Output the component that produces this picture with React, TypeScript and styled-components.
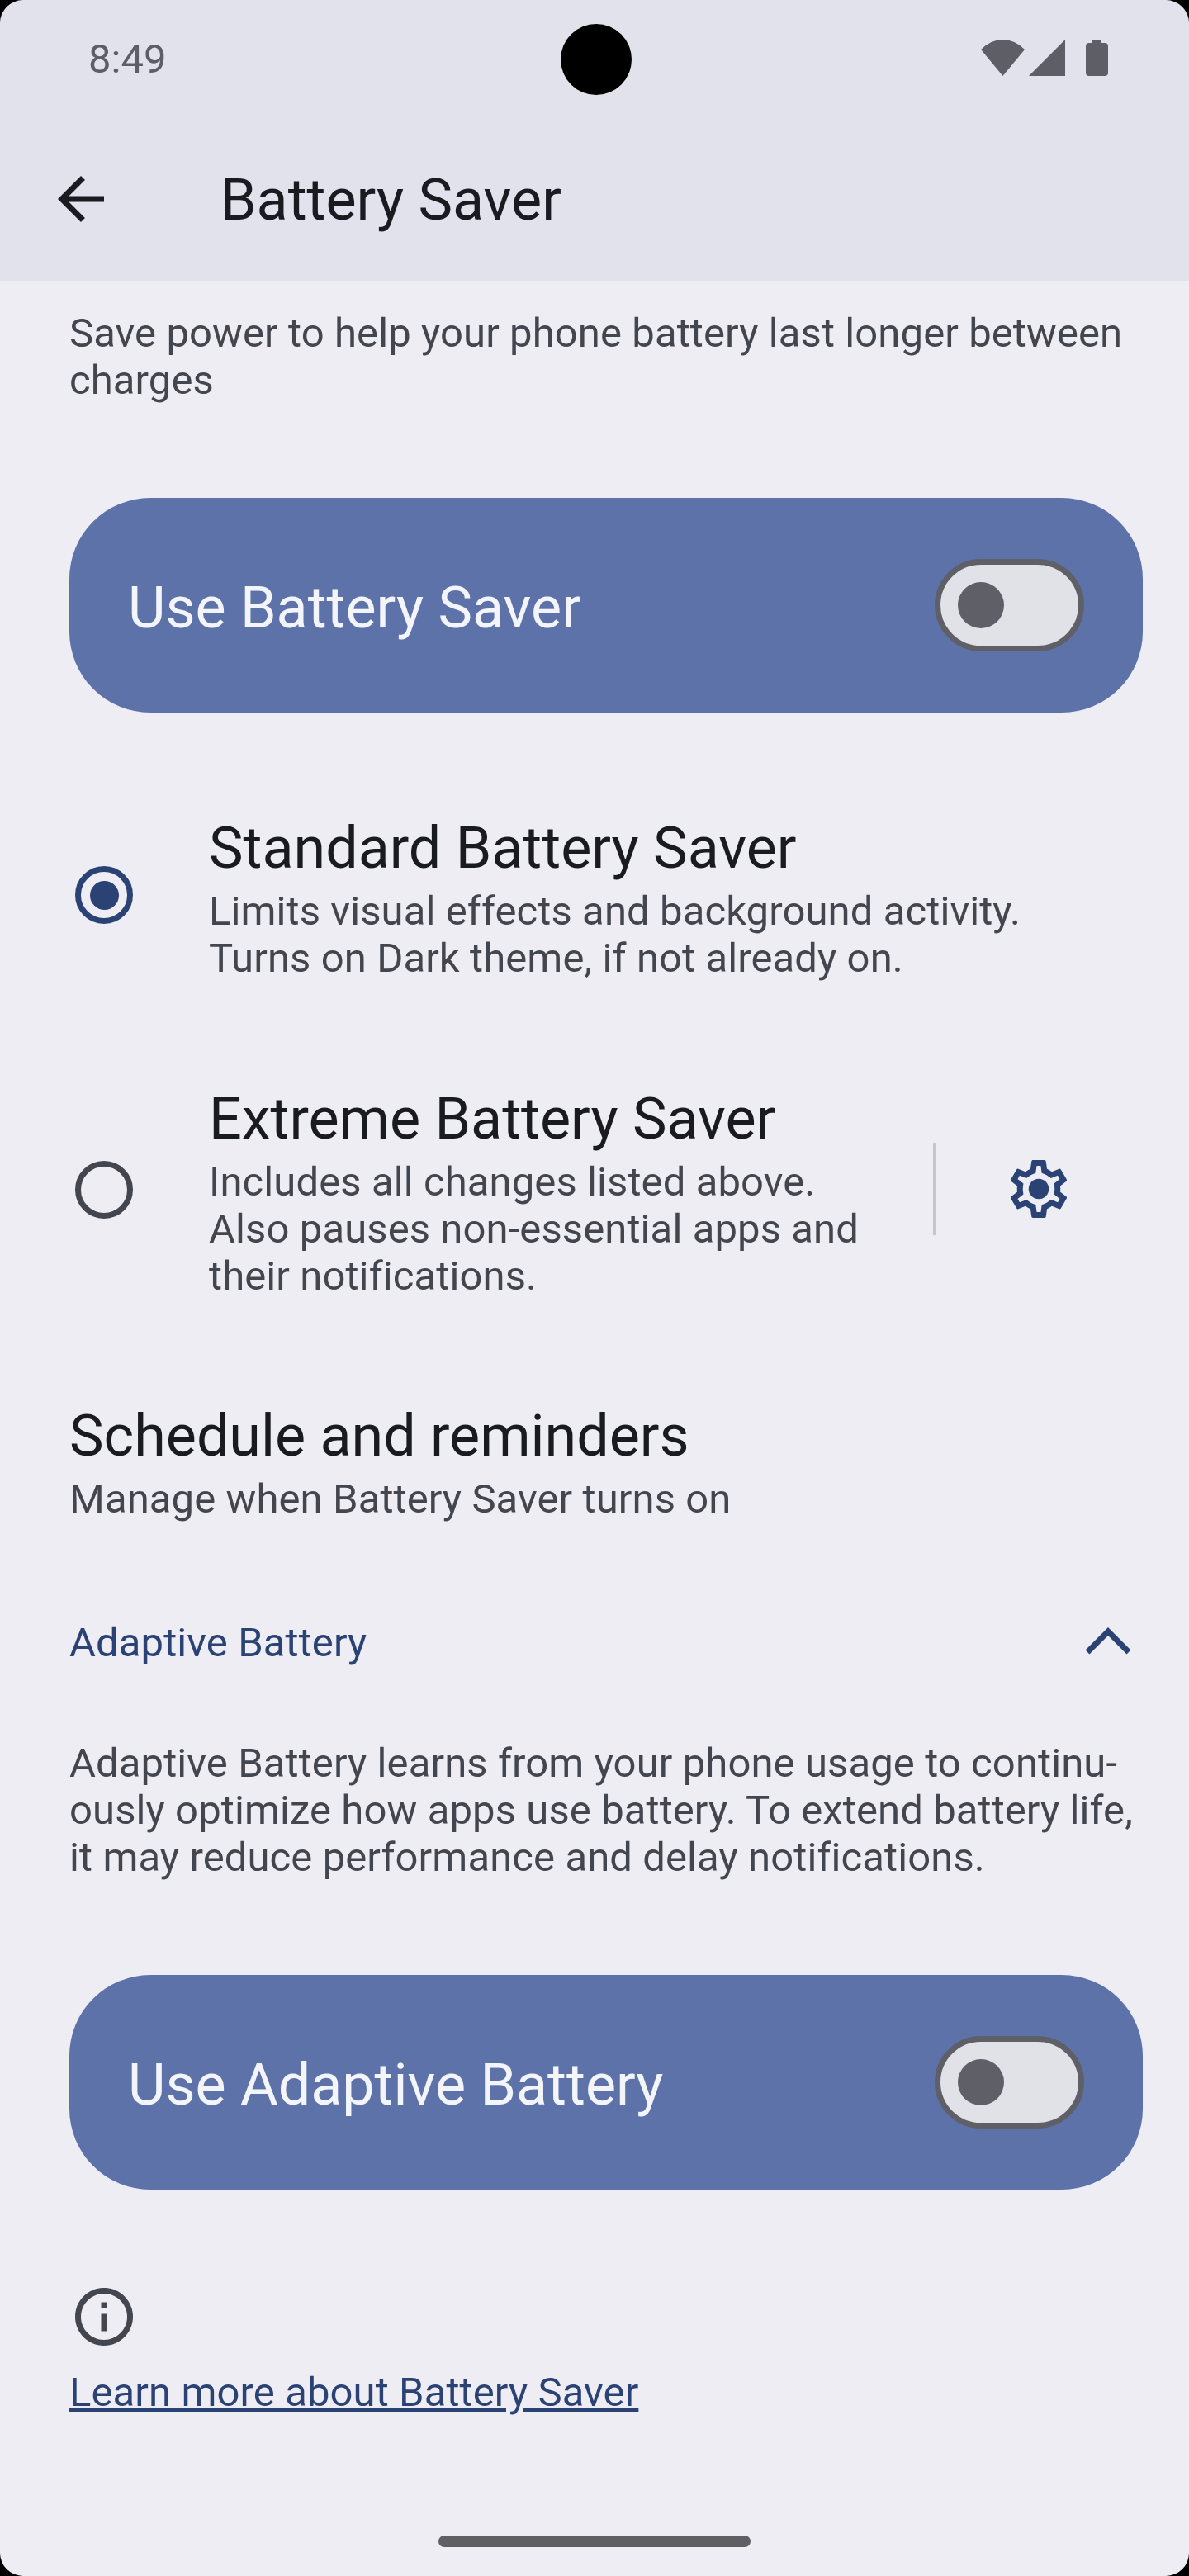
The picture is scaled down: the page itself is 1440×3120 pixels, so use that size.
import React from 'react';
import styled, { createGlobalStyle } from 'styled-components';

const GlobalStyle = createGlobalStyle`
  html, body {
    margin: 0;
    padding: 0;
    background: #000;
  }
  * {
    box-sizing: border-box;
  }
`;

const Screen = styled.div`
  position: relative;
  width: 1440px;
  height: 3120px;
  overflow: hidden;
  display: flex;
  flex-direction: column;
  background: #000;
  font-family: Roboto, "Liberation Sans", sans-serif;
  color: #1a1b21;
`;

const AppBar = styled.header`
  height: 340px;
  flex: none;
  background: #e1e2ec;
  border-radius: 28px 28px 0 0;
`;

const StatusBar = styled.div`
  height: 140px;
  padding: 0 98px 0 107px;
  display: flex;
  align-items: center;
  justify-content: space-between;
`;

const Clock = styled.span`
  margin-top: 3px;
  font-size: 49px;
  color: #5d5e66;
`;

const StatusIcons = styled.div`
  display: flex;
  align-items: flex-start;
  gap: 5px;
  height: 44px;
`;

const Camera = styled.div`
  position: absolute;
  left: 679px;
  top: 29px;
  width: 86px;
  height: 86px;
  border-radius: 50%;
  background: #000;
`;

const Toolbar = styled.div`
  height: 200px;
  padding: 2px 0 0 56px;
  display: flex;
  align-items: center;
`;

const Title = styled.h1`
  margin: 2px 0 0 127px;
  font-size: 70px;
  font-weight: 400;
  color: #1a1b21;
`;

const Content = styled.main`
  flex: 1;
  padding: 35px 56px 0 84px;
  background: #eeedf4;
  border-radius: 0 0 28px 28px;
`;

const Body = styled.p`
  margin: 0;
  font-size: 49px;
  line-height: 57px;
  letter-spacing: 0.1px;
  color: #44464f;
`;

const ToggleCard = styled.div<{ $top: number }>`
  margin-top: ${(p) => p.$top}px;
  height: 260px;
  padding: 0 71px;
  border-radius: 98px;
  background: #5c72a9;
  display: flex;
  align-items: center;
  justify-content: space-between;
  font-size: 70px;
  color: #f4f5fb;
`;

const CardLabel = styled.span`
  padding-top: 5px;
`;

const Switch = styled.div`
  width: 181px;
  height: 112px;
  padding: 0 0 0 21px;
  border: 7px solid #5f6067;
  border-radius: 56px;
  background: #e1e2e7;
  display: flex;
  align-items: center;
`;

const Thumb = styled.div`
  width: 56px;
  height: 56px;
  border-radius: 50%;
  background: #5f6067;
`;

const OptionRow = styled.div<{ $top: number }>`
  margin-top: ${(p) => p.$top}px;
  display: flex;
  align-items: center;
`;

const RadioSlot = styled.div`
  width: 169px;
  flex: none;
  padding: 0 0 4px 7px;
`;

const Radio = styled.div<{ $checked?: boolean }>`
  width: 70px;
  height: 70px;
  border-radius: 50%;
  border: 7px solid ${(p) => (p.$checked ? '#2a4374' : '#44464f')};
  display: flex;
  align-items: center;
  justify-content: center;
  &::after {
    content: '';
    display: ${(p) => (p.$checked ? 'block' : 'none')};
    width: 35px;
    height: 35px;
    border-radius: 50%;
    background: #2a4374;
  }
`;

const OptionText = styled.div<{ $reserve: number }>`
  flex: 1;
  min-width: 0;
  padding-right: ${(p) => p.$reserve}px;
`;

const Heading = styled.h2`
  margin: 0 0 6px;
  padding-top: 2px;
  font-size: 70px;
  line-height: 84px;
  font-weight: 400;
  color: #1a1b21;
`;

const ScheduleBlock = styled.section`
  margin-top: 121px;
`;

const Divider = styled.div`
  width: 3px;
  height: 112px;
  margin-bottom: 6px;
  background: #c5c5cb;
  flex: none;
`;

const GearSlot = styled.div`
  width: 251px;
  flex: none;
  padding: 0 0 6px 83px;
  display: flex;
`;

const SectionHeader = styled.div`
  margin-top: 115px;
  height: 60px;
  padding-right: 14px;
  display: flex;
  align-items: center;
  justify-content: space-between;
  font-size: 49px;
  letter-spacing: 0.1px;
  color: #2a4374;
`;

const ChevronIcon = styled.svg`
  margin-bottom: 3px;
`;

const ParagraphBlock = styled.div`
  margin-top: 88px;
`;

const Footer = styled.div`
  margin-top: 112px;
`;

const InfoIcon = styled.svg`
  display: block;
`;

const BatteryIcon = styled.svg`
  margin-left: 20px;
`;

const LearnMore = styled.a`
  display: block;
  margin-top: 21px;
  font-size: 49px;
  line-height: 57px;
  letter-spacing: 0.1px;
  color: #2a4374;
  text-decoration: underline;
`;

const HomeIndicator = styled.div`
  position: absolute;
  left: 531px;
  top: 3071px;
  width: 378px;
  height: 14px;
  border-radius: 7px;
  background: #606062;
`;

const App = () => {
  return (
    <Screen>
      <GlobalStyle />
      <AppBar>
        <StatusBar>
          <Clock>8:49</Clock>
          <StatusIcons>
            <svg width="53" height="44" viewBox="0 0 53 44">
              <path d="M26.5 44 0 12Q12 0 26.5 0T53 12Z" fill="#5d5e66" />
            </svg>
            <svg width="44" height="44" viewBox="0 0 44 44">
              <path d="M44 0V44H0Z" fill="#5d5e66" />
            </svg>
            <BatteryIcon width="27" height="44" viewBox="0 0 27 44">
              <path d="M8 0H19V4H23Q27 4 27 8V40Q27 44 23 44H4Q0 44 0 40V8Q0 4 4 4H8Z" fill="#5d5e66" />
            </BatteryIcon>
          </StatusIcons>
        </StatusBar>
        <Toolbar>
          <svg width="84" height="84" viewBox="0 0 24 24">
            <path d="M20 11H7.83l5.59-5.59L12 4l-8 8 8 8 1.41-1.41L7.83 13H20v-2z" fill="#1a1b21" />
          </svg>
          <Title>Battery Saver</Title>
        </Toolbar>
      </AppBar>
      <Camera />
      <Content>
        <Body>Save power to help your phone battery last longer between charges</Body>
        <ToggleCard $top={114}>
          <CardLabel>Use Battery Saver</CardLabel>
          <Switch><Thumb /></Switch>
        </ToggleCard>
        <OptionRow $top={120}>
          <RadioSlot><Radio $checked /></RadioSlot>
          <OptionText $reserve={100}>
            <Heading>Standard Battery Saver</Heading>
            <Body>Limits visual effects and background activity. Turns on Dark theme, if not already on.</Body>
          </OptionText>
        </OptionRow>
        <OptionRow $top={122}>
          <RadioSlot><Radio /></RadioSlot>
          <OptionText $reserve={60}>
            <Heading>Extreme Battery Saver</Heading>
            <Body>Includes all changes listed above. Also pauses non-essential apps and their notifications.</Body>
          </OptionText>
          <Divider />
          <GearSlot>
            <svg width="84" height="84" viewBox="0 0 24 24" fill="#2a4374">
              <path d="M19.43 12.98c.04-.32.07-.64.07-.98 0-.34-.03-.66-.07-.98l2.11-1.65c.19-.15.24-.42.12-.64l-2-3.46c-.09-.16-.26-.25-.44-.25-.06 0-.12.01-.17.03l-2.49 1c-.52-.4-1.08-.73-1.69-.98l-.38-2.65C14.46 2.18 14.25 2 14 2h-4c-.25 0-.46.18-.49.42l-.38 2.65c-.61.25-1.17.59-1.69.98l-2.49-1c-.06-.02-.12-.03-.18-.03-.17 0-.34.09-.43.25l-2 3.46c-.13.22-.07.49.12.64l2.11 1.65c-.04.32-.07.65-.07.98 0 .33.03.66.07.98l-2.11 1.65c-.19.15-.24.42-.12.64l2 3.46c.09.16.26.25.44.25.06 0 .12-.01.17-.03l2.49-1c.52.4 1.08.73 1.69.98l.38 2.65c.03.24.24.42.49.42h4c.25 0 .46-.18.49-.42l.38-2.65c.61-.25 1.17-.59 1.69-.98l2.49 1c.06.02.12.03.18.03.17 0 .34-.09.43-.25l2-3.46c.12-.22.07-.49-.12-.64l-2.11-1.65zm-1.98-1.71c.04.31.05.52.05.73 0 .21-.02.43-.05.73l-.14 1.13.89.7 1.08.84-.7 1.21-1.27-.51-1.04-.42-.9.68c-.43.32-.84.56-1.25.73l-1.06.43-.16 1.13-.2 1.35h-1.4l-.19-1.35-.16-1.13-1.06-.43c-.43-.18-.83-.41-1.23-.71l-.91-.7-1.06.43-1.27.51-.7-1.21 1.08-.84.89-.7-.14-1.13c-.03-.31-.05-.54-.05-.74s.02-.43.05-.73l.14-1.13-.89-.7-1.08-.84.7-1.21 1.27.51 1.04.42.9-.68c.43-.32.84-.56 1.25-.73l1.06-.43.16-1.13.2-1.35h1.39l.19 1.35.16 1.13 1.06.43c.43.18.83.41 1.23.71l.91.7 1.06-.43 1.27-.51.7 1.21-1.07.85-.89.7.14 1.13z" />
              <circle cx="12" cy="12" r="3.5" />
            </svg>
          </GearSlot>
        </OptionRow>
        <ScheduleBlock>
          <Heading>Schedule and reminders</Heading>
          <Body>Manage when Battery Saver turns on</Body>
        </ScheduleBlock>
        <SectionHeader>
          Adaptive Battery
          <ChevronIcon width="56" height="34" viewBox="0 0 56 34" fill="none" stroke="#2a4374" strokeWidth="7">
            <path d="M3 30 28 5 53 30" />
          </ChevronIcon>
        </SectionHeader>
        <ParagraphBlock>
          <Body>Adaptive Battery learns from your phone usage to continu&shy;ously optimize how apps use battery. To extend battery life, it may reduce performance and delay notifications.</Body>
        </ParagraphBlock>
        <ToggleCard $top={114}>
          <CardLabel>Use Adaptive Battery</CardLabel>
          <Switch><Thumb /></Switch>
        </ToggleCard>
        <Footer>
          <InfoIcon width="84" height="84" viewBox="0 0 24 24" fill="#44464f">
            <path d="M11 7h2v2h-2zm0 4h2v6h-2zm1-9C6.48 2 2 6.48 2 12s4.48 10 10 10 10-4.48 10-10S17.52 2 12 2zm0 18c-4.41 0-8-3.59-8-8s3.59-8 8-8 8 3.59 8 8-3.59 8-8 8z" />
          </InfoIcon>
          <LearnMore>Learn more about Battery Saver</LearnMore>
        </Footer>
      </Content>
      <HomeIndicator />
    </Screen>
  );
};

export default App;
